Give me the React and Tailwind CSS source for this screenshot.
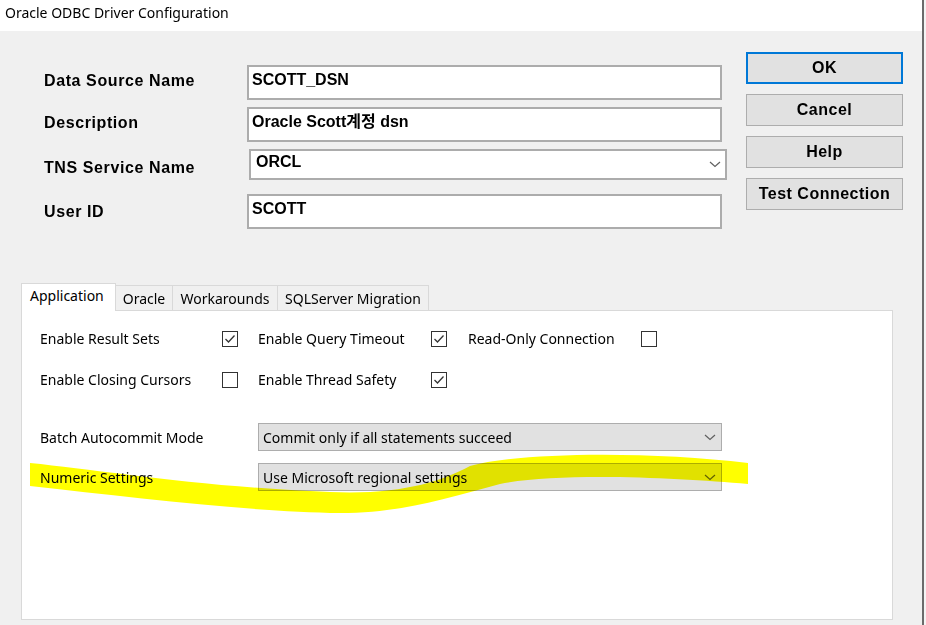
import React from "react";

const boldFont = { fontFamily: '"Liberation Sans", "Noto Sans CJK KR", Arial, sans-serif' };
const uiFont = { fontFamily: '"Noto Sans", "Noto Sans CJK KR", sans-serif' };

function Chevron() {
  return (
    <svg width="12" height="7" viewBox="0 0 12 7" className="shrink-0">
      <path d="M1 1 L6 5.5 L11 1" fill="none" stroke="#606060" strokeWidth="1.2" />
    </svg>
  );
}

function Checkbox({ checked }) {
  return (
    <div className="flex h-[16px] w-[16px] shrink-0 items-center justify-center border border-[#333333] bg-white">
      {checked && (
        <svg width="12" height="10" viewBox="0 0 12 10">
          <path d="M1.5 5 L4.5 8 L10.5 1.5" fill="none" stroke="#333333" strokeWidth="1.3" />
        </svg>
      )}
    </div>
  );
}

function FieldRow({ label, value, labelClass = "", children }) {
  return (
    <div className="flex items-center">
      <div className={`w-[203px] text-[16px] font-bold tracking-[0.6px] text-black ${labelClass}`}>{label}</div>
      {children || (
        <div className="h-[35px] w-[475px] border-2 border-[#acacac] bg-white pl-[3px] pt-[2px] text-[16px] font-bold leading-[22px] text-black">
          {value}
        </div>
      )}
    </div>
  );
}

function Button({ label, primary }) {
  return (
    <div
      className={`flex h-[32px] w-[157px] items-center justify-center bg-[#e1e1e1] text-[16px] font-bold tracking-[0.5px] text-black ${
        primary ? "border-2 border-[#0078d7]" : "border border-[#adadad]"
      }`}
    >
      {label}
    </div>
  );
}

function CheckItem({ label, checked, width }) {
  return (
    <div className="flex items-center">
      <div className={`${width} text-[14px] text-black`}>{label}</div>
      <Checkbox checked={checked} />
    </div>
  );
}

function SelectRow({ label, value }) {
  return (
    <div className="flex items-center">
      <div className="w-[218px] text-[14px] text-black">{label}</div>
      <div className="flex h-[28px] w-[464px] items-center justify-between border border-[#adadad] bg-[#e1e1e1] pl-[4px] pr-[5px] text-[14px] text-black">
        <span>{value}</span>
        <Chevron />
      </div>
    </div>
  );
}

export default function App() {
  const tabs = [
    { name: "Application", w: "w-[95px]" },
    { name: "Oracle", w: "w-[57px]" },
    { name: "Workarounds", w: "w-[105px]" },
    { name: "SQLServer Migration", w: "w-[151px]" },
  ];

  return (
    <div className="relative flex h-[625px] w-[926px] overflow-hidden bg-[#f0f0f0]">
      <div className="flex w-[922px] flex-col">
        <div className="h-[31px] bg-white pl-[5px] pt-[2px] text-[14px] leading-[22px] text-black" style={uiFont}>
          Oracle ODBC Driver Configuration
        </div>

        <div className="flex" style={boldFont}>
          <div className="ml-[44px] mt-[34px] flex flex-col">
            <FieldRow label="Data Source Name" value="SCOTT_DSN" labelClass="-mt-[3px]" />
            <div className="mt-[7px]">
              <FieldRow label="Description" value="Oracle Scott계정 dsn" labelClass="-mt-[3px]" />
            </div>
            <div className="mt-[6px]">
              <FieldRow label="TNS Service Name" labelClass="pt-[8px]">
                <div className="ml-[2px] flex h-[31px] w-[478px] items-center justify-between border-2 border-[#acacac] bg-white pl-[5px] pr-[4px]">
                  <span className="-mt-[4px] text-[16px] font-bold text-black">ORCL</span>
                  <Chevron />
                </div>
              </FieldRow>
            </div>
            <div className="mt-[14px]">
              <FieldRow label="User ID" value="SCOTT" />
            </div>
          </div>

          <div className="ml-[19px] mt-[21px] flex flex-col gap-[10px]">
            <Button label="OK" primary />
            <Button label="Cancel" />
            <Button label="Help" />
            <Button label="Test Connection" />
          </div>
        </div>

        <div className="ml-[21px] mt-[54px] flex flex-col" style={uiFont}>
          <div className="flex items-end">
            {tabs.map((t, i) =>
              i === 0 ? (
                <div
                  key={t.name}
                  className={`${t.w} relative z-10 -mb-px h-[28px] border border-b-0 border-[#d9d9d9] bg-white pl-[8px] pt-[1px] text-[14px] text-black`}
                >
                  {t.name}
                </div>
              ) : (
                <div
                  key={t.name}
                  className={`${t.w} flex h-[25px] items-center justify-center border border-b-0 border-l-0 border-[#d9d9d9] bg-[#f0f0f0] text-[14px] text-black`}
                >
                  {t.name}
                </div>
              )
            )}
          </div>
          <div className="flex h-[310px] w-[872px] flex-col border border-[#d9d9d9] bg-white pl-[18px]">
            <div className="mt-[17px] flex items-center">
              <CheckItem label="Enable Result Sets" checked width="w-[182px]" />
              <div className="ml-[20px]">
                <CheckItem label="Enable Query Timeout" checked width="w-[173px]" />
              </div>
              <div className="ml-[21px]">
                <CheckItem label="Read-Only Connection" width="w-[173px]" />
              </div>
            </div>
            <div className="mt-[20px] flex items-center">
              <CheckItem label="Enable Closing Cursors" width="w-[182px]" />
              <div className="ml-[20px]">
                <CheckItem label="Enable Thread Safety" checked width="w-[173px]" />
              </div>
            </div>
            <div className="mt-[33px] flex flex-col gap-[12px]">
              <SelectRow label="Batch Autocommit Mode" value="Commit only if all statements succeed" />
              <SelectRow label="Numeric Settings" value="Use Microsoft regional settings" />
            </div>
          </div>
        </div>
      </div>

      <div className="w-[2px] bg-[#6b6b6b]" />
      <div className="flex-1 bg-[#f4f4f4]" />

      <svg
        className="pointer-events-none absolute inset-0 mix-blend-multiply"
        width="926"
        height="625"
        viewBox="0 0 926 625"
      >
        <path
          d="M30 463 C100 470 200 487 330 492 C400 495 440 482 470 466 C520 452 650 451 748 463 L748 484 C680 478 560 472 500 484 C440 500 400 513 340 513 C250 512 130 497 30 486 Z"
          fill="#ffff00"
        />
      </svg>
    </div>
  );
}
